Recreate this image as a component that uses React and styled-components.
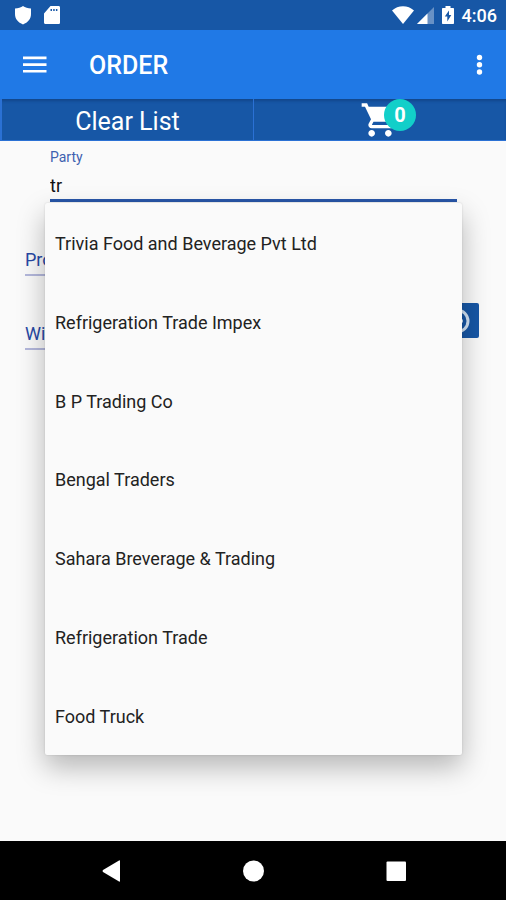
import React, { useState } from "react";
import styled, { createGlobalStyle } from "styled-components";

const GlobalStyle = createGlobalStyle`
  * { box-sizing: border-box; }
  body { margin: 0; background: #fafafa; font-family: Roboto, sans-serif; }
  button, input { font-family: inherit; }
  button { cursor: pointer; }
`;

const Screen = styled.div`
  display: flex;
  flex-direction: column;
  min-height: 100vh;
`;

const StatusBar = styled.div`
  display: flex;
  align-items: center;
  justify-content: space-between;
  height: 30px;
  padding: 0 9px 0 12px;
  background: #1757a6;
  color: #fff;
`;

const StatusGroup = styled.div`
  display: flex;
  align-items: center;
  gap: ${(p) => p.$gap}px;
`;

const Clock = styled.time`
  padding-top: 2px;
  font-size: 18px;
  line-height: 28px;
  font-weight: 500;
`;

const AppBar = styled.header`
  display: flex;
  align-items: center;
  height: 69px;
  padding: 0 16px 0 20px;
  background: #2079e6;
  color: #fff;
`;

const IconButton = styled.button`
  display: flex;
  align-items: center;
  justify-content: center;
  padding: 0;
  border: 0;
  background: none;
  color: inherit;
`;

const Title = styled.h1`
  flex: 1;
  margin: 0 0 0 39px;
  padding-top: 3px;
  font-size: 25px;
  line-height: 32px;
  font-weight: 500;
`;

const Actions = styled.div`
  display: grid;
  grid-template-columns: 1fr 1fr;
  height: 42px;
  background: #1757a6;
  box-shadow: inset 0 3px 3px -1px #12468a;
`;

const Action = styled.button`
  display: flex;
  align-items: center;
  justify-content: center;
  padding: ${(p) => p.$top}px 0 0;
  border: 1px solid #2b71d4;
  border-width: 0 0 1px ${(p) => p.$edge}px;
  background: none;
  color: #fff;
  font-size: 25px;
  line-height: 32px;
`;

const Cart = styled.span`
  position: relative;
  display: flex;
`;

const Badge = styled.span`
  position: absolute;
  top: -1px;
  left: 24px;
  width: 32px;
  height: 32px;
  border-radius: 50%;
  background: #12cfc9;
  font-size: 20px;
  line-height: 33px;
  font-weight: 700;
  text-align: center;
`;

const Form = styled.main`
  flex: 1;
  padding: 7px 25px 0;
`;

const PartyField = styled.div`
  position: relative;
  margin: 0 24px 0 25px;
`;

const Label = styled.label`
  display: block;
  color: #3f61b0;
  font-size: 14px;
  line-height: 18px;
`;

const TextInput = styled.input`
  display: block;
  width: 100%;
  height: ${(p) => p.$height}px;
  padding: ${(p) => p.$pad}px 0 0;
  border: 0;
  border-bottom: ${(p) => p.$line};
  border-radius: 0;
  outline: 0;
  background: none;
  color: #111;
  font-size: 18px;
  line-height: 24px;
  &::placeholder { color: #2748a5; opacity: 1; }
`;

const Suggestions = styled.ul`
  position: absolute;
  z-index: 1;
  top: calc(100% + 1px);
  left: -5px;
  right: -5px;
  display: grid;
  grid-auto-rows: 1fr;
  height: 552px;
  margin: 0;
  padding: 0;
  list-style: none;
  border-radius: 2px;
  background: #fafafa;
  box-shadow: 0 12px 28px rgba(0, 0, 0, 0.28), 0 0 2px rgba(0, 0, 0, 0.15);
`;

const Suggestion = styled.button`
  width: 100%;
  height: 100%;
  padding: 3px 10px 0;
  border: 0;
  background: none;
  color: #222;
  font-size: 18px;
  line-height: 24px;
  text-align: left;
`;

const ProductField = styled.div`
  margin: 39px 24px 0 0;
`;

const QuantityRow = styled.div`
  display: flex;
  align-items: flex-start;
  gap: 16px;
  margin-top: 27px;
  padding-right: 2px;
`;

const QuantityField = styled.div`
  flex: 1;
  padding-top: 13px;
`;

const AddButton = styled(IconButton)`
  width: 44px;
  height: 35px;
  border-radius: 2px;
  background: #1757a6;
  color: #d3e5f8;
`;

const NavBar = styled.nav`
  display: flex;
  align-items: center;
  justify-content: center;
  gap: 118px;
  height: 59px;
  background: #000;
  color: #fff;
`;

const parties = [
  "Trivia Food and Beverage Pvt Ltd",
  "Refrigeration Trade Impex",
  "B P Trading Co",
  "Bengal Traders",
  "Sahara Breverage & Trading",
  "Refrigeration Trade",
  "Food Truck",
];

const ShieldIcon = () => (
  <svg width="22" height="22" viewBox="0 0 22 22" fill="currentColor" aria-hidden="true">
    <path d="M11 2c2 1.700 5 2.400 8 2.500V10c0 5-3 8.300-8 10.500C6 18.300 3 15 3 10V4.500C6 4.400 9 3.700 11 2z" />
  </svg>
);

const CardIcon = () => (
  <svg width="18" height="22" viewBox="0 0 18 22" fill="currentColor" aria-hidden="true">
    <path fillRule="evenodd" d="M6.500 2H14.500C15.500 2 16 2.700 16 3.500v15c0 1-.6 1.500-1.500 1.500h-13C.6 20 0 19.400 0 18.500V9.500zM6.500 5v2H8V5zm2.700 0v2h1.500V5zm2.700 0v2h1.500V5z" />
  </svg>
);

const WifiIcon = () => (
  <svg width="24" height="20" viewBox="0 0 24 20" fill="currentColor" aria-hidden="true">
    <path d="M1 5.500C7-.2 17-.2 23 5.500L12 19z" />
  </svg>
);

const SignalIcon = () => (
  <svg width="18" height="18" viewBox="0 0 18 18" fill="currentColor" aria-hidden="true">
    <path d="M18 1v17H1z" opacity=".35" />
    <path d="M11.500 7.500V18H1z" />
  </svg>
);

const BatteryIcon = () => (
  <svg width="12" height="20" viewBox="0 0 12 20" fill="currentColor" aria-hidden="true">
    <path fillRule="evenodd" d="M3.500 1h5v2H11c.6 0 1 .4 1 1v14c0 .6-.4 1-1 1H1c-.6 0-1-.4-1-1V4c0-.6.4-1 1-1h2.500zM7 5.500 2.800 11.500H5.300V16.500L9.300 10H7z" />
  </svg>
);

const MenuIcon = () => (
  <svg width="30" height="30" viewBox="0 0 30 30" fill="currentColor" aria-hidden="true">
    <path d="M3 6.500h23.500v2.700H3zm0 6.700h23.500v2.700H3zm0 6.700h23.500v2.700H3z" />
  </svg>
);

const MoreIcon = () => (
  <svg width="22" height="30" viewBox="0 0 22 30" fill="currentColor" aria-hidden="true">
    <circle cx="11.500" cy="7.500" r="2.700" />
    <circle cx="11.500" cy="14.700" r="2.700" />
    <circle cx="11.500" cy="22" r="2.700" />
  </svg>
);

const CartIcon = () => (
  <svg width="40" height="40" viewBox="0 0 24 24" fill="currentColor" aria-hidden="true">
    <path d="M7 18c-1.100 0-1.990.9-1.990 2S5.900 22 7 22s2-.9 2-2-.9-2-2-2zM1 2v2h2l3.600 7.590-1.350 2.450c-.16.280-.25.610-.25.960 0 1.100.9 2 2 2h12v-2H7.420c-.14 0-.25-.11-.25-.25l.03-.12.9-1.630h7.450c.75 0 1.410-.41 1.750-1.030l3.580-6.490A1 1 0 0 0 20 4H5.210l-.94-2zm16 16c-1.100 0-1.990.9-1.990 2s.89 2 1.990 2 2-.9 2-2-.9-2-2-2z" />
  </svg>
);

const RingIcon = () => (
  <svg width="28" height="28" viewBox="0 0 28 28" fill="none" stroke="currentColor" strokeWidth="3" aria-hidden="true">
    <circle cx="14" cy="14" r="11" />
    <path d="M14 8v12M8 14h12" />
  </svg>
);

const BackIcon = () => (
  <svg width="24" height="24" viewBox="0 0 24 24" fill="currentColor" aria-hidden="true">
    <path d="M21 2v20q0 1-1 .5L4 13q-1-1 0-2l16-9.500q1-.5 1 .5z" />
  </svg>
);

const HomeIcon = () => (
  <svg width="24" height="24" viewBox="0 0 24 24" fill="currentColor" aria-hidden="true">
    <circle cx="12.500" cy="12" r="10.500" />
  </svg>
);

const RecentIcon = () => (
  <svg width="24" height="24" viewBox="0 0 24 24" fill="currentColor" aria-hidden="true">
    <rect x="3.500" y="2.500" width="19.500" height="19.500" rx="1" />
  </svg>
);

export default function App() {
  const [party, setParty] = useState("tr");

  return (
    <Screen>
      <GlobalStyle />
      <StatusBar>
        <StatusGroup $gap={10}>
          <ShieldIcon />
          <CardIcon />
        </StatusGroup>
        <StatusGroup $gap={8}>
          <StatusGroup $gap={1}>
            <WifiIcon />
            <SignalIcon />
          </StatusGroup>
          <BatteryIcon />
          <Clock>4:06</Clock>
        </StatusGroup>
      </StatusBar>
      <AppBar>
        <IconButton aria-label="Menu"><MenuIcon /></IconButton>
        <Title>ORDER</Title>
        <IconButton aria-label="More options"><MoreIcon /></IconButton>
      </AppBar>
      <Actions>
        <Action $edge={2} $top={4}>Clear List</Action>
        <Action $edge={1} $top={0} aria-label="Cart">
          <Cart>
            <CartIcon />
            <Badge>0</Badge>
          </Cart>
        </Action>
      </Actions>
      <Form>
        <PartyField>
          <Label htmlFor="party">Party</Label>
          <TextInput
            id="party"
            $height={36}
            $pad={6}
            $line="3px solid #2856a8"
            value={party}
            onChange={(e) => setParty(e.target.value)}
          />
          <Suggestions>
            {parties.map((name) => (
              <li key={name}>
                <Suggestion onClick={() => setParty(name)}>{name}</Suggestion>
              </li>
            ))}
          </Suggestions>
        </PartyField>
        <ProductField>
          <TextInput aria-label="Product" placeholder="Product" $height={35} $pad={3} $line="2px solid #b4b8dc" />
        </ProductField>
        <QuantityRow>
          <QuantityField>
            <TextInput aria-label="With" placeholder="With" $height={34} $pad={2} $line="2px solid #b4b8dc" />
          </QuantityField>
          <AddButton aria-label="Add"><RingIcon /></AddButton>
        </QuantityRow>
      </Form>
      <NavBar>
        <IconButton aria-label="Back"><BackIcon /></IconButton>
        <IconButton aria-label="Home"><HomeIcon /></IconButton>
        <IconButton aria-label="Recent apps"><RecentIcon /></IconButton>
      </NavBar>
    </Screen>
  );
}
